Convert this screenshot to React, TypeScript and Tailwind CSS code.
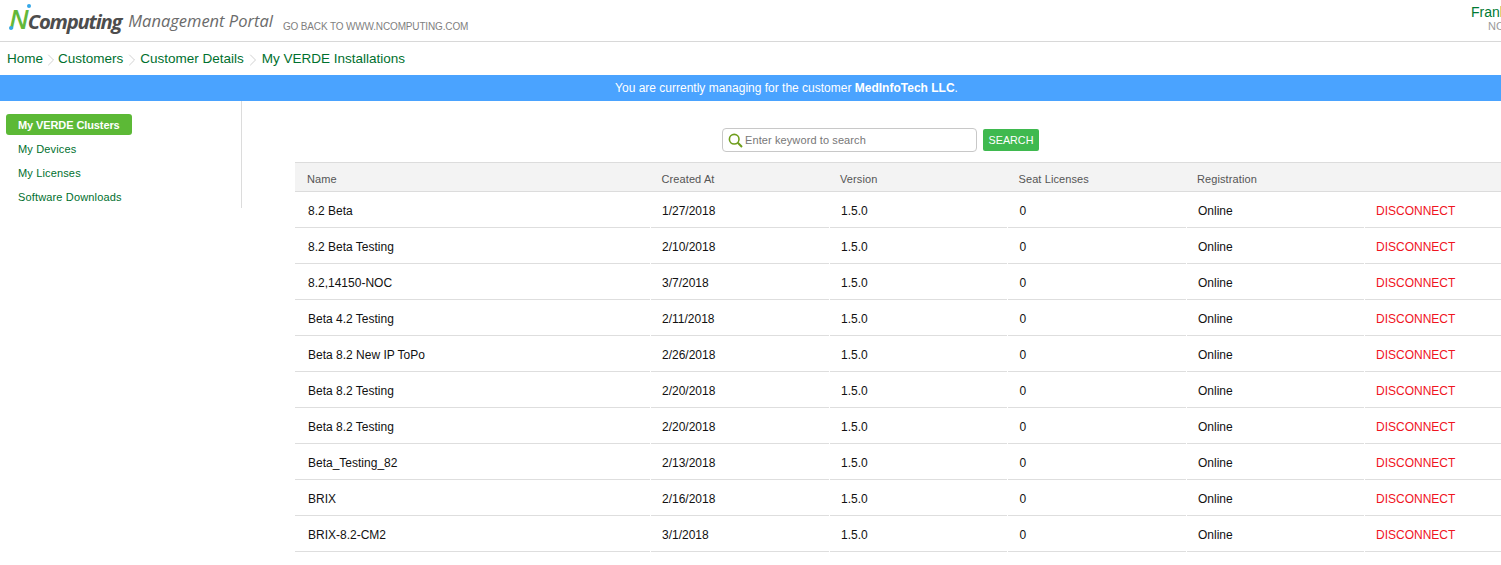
import React from 'react';
import { ChevronRight } from 'lucide-react';

const clusters = [
  { name: '8.2 Beta', created: '1/27/2018' },
  { name: '8.2 Beta Testing', created: '2/10/2018' },
  { name: '8.2,14150-NOC', created: '3/7/2018' },
  { name: 'Beta 4.2 Testing', created: '2/11/2018' },
  { name: 'Beta 8.2 New IP ToPo', created: '2/26/2018' },
  { name: 'Beta 8.2 Testing', created: '2/20/2018' },
  { name: 'Beta 8.2 Testing', created: '2/20/2018' },
  { name: 'Beta_Testing_82', created: '2/13/2018' },
  { name: 'BRIX', created: '2/16/2018' },
  { name: 'BRIX-8.2-CM2', created: '3/1/2018' },
];

const crumbs = [
  { label: 'Home', chevron: '' },
  { label: 'Customers', chevron: 'mx-[-2.5px]' },
  { label: 'Customer Details', chevron: 'mx-[-1.5px]' },
  { label: 'My VERDE Installations', chevron: 'mx-[-1px]' },
];
const navItems = ['My Devices', 'My Licenses', 'Software Downloads'];

const Logo = () => (
  <div className="relative flex items-baseline whitespace-nowrap">
    <span className="text-[27px] leading-[30px] font-semibold italic tracking-[-1px] text-[#63b83a] font-['Open_Sans',sans-serif]">N</span>
    <span className="absolute left-[18px] top-[0px] h-[4px] w-[4px] rounded-full bg-[#35a7e8]" />
    <span className="absolute left-[0px] top-[22px] h-[4px] w-[4px] rounded-full bg-[#35a7e8]" />
    <span className="text-[20.25px] leading-[30px] font-bold italic tracking-[-1.2px] text-[#4d4d4d] font-['Open_Sans',sans-serif]">Computing</span>
  </div>
);

const Row = ({ name, created }: { name: string; created: string }) => (
  <div className="flex h-9 text-xs text-[#111]">
    <div className="flex w-[355px] items-center border-b border-[#dedede] pl-[13px] pt-[3px]">{name}</div>
    <div className="ml-px flex w-[177.5px] items-center border-b border-[#dedede] pl-[11px] pt-[3px]">{created}</div>
    <div className="ml-px flex w-[177.5px] items-center border-b border-[#dedede] pl-[11.5px] pt-[3px]">1.5.0</div>
    <div className="ml-px flex w-[177.5px] items-center border-b border-[#dedede] pl-[11.5px] pt-[3px]">0</div>
    <div className="ml-px flex w-[177.5px] items-center border-b border-[#dedede] pl-[11.5px] pt-[3px]">Online</div>
    <div className="ml-px flex flex-1 items-center border-b border-[#dedede] pl-[11px] pt-[3px] text-[#f0141e]">DISCONNECT</div>
  </div>
);

export default function App() {
  return (
    <div className="h-[565px] w-[1501px] overflow-hidden bg-white font-['Liberation_Sans',Arial,sans-serif]">
      {/* Header */}
      <div className="relative flex h-[42px] items-start border-b border-[#d8d8d8] pl-[9px] pt-[4px]">
        <Logo />
        <span className="ml-[7px] mt-[4px] text-[16.5px] leading-[26px] italic text-[#6b6b6b] font-['Open_Sans',sans-serif] whitespace-nowrap">Management Portal</span>
        <a className="ml-[10px] mt-[17px] text-[10px] leading-[12px] tracking-[-0.15px] text-[#7f7f7f] whitespace-nowrap">GO BACK TO WWW.NCOMPUTING.COM</a>
        <div className="absolute left-[1471px] top-[4px] whitespace-nowrap text-sm leading-[16px] text-[#007a33]">Frank</div>
        <div className="absolute left-[1488px] top-[20px] whitespace-nowrap text-[11px] leading-[13px] text-[#9a9a9a]">NCOMPUTING</div>
      </div>

      {/* Breadcrumb */}
      <div className="flex h-[33px] items-center pl-[7px] pt-[2px] text-[13.5px] text-[#00702e]">
        {crumbs.map((crumb) => (
          <React.Fragment key={crumb.label}>
            {crumb.chevron && <ChevronRight className={`h-5 w-5 text-[#c8c8c8] ${crumb.chevron}`} strokeWidth={1} />}
            <span>{crumb.label}</span>
          </React.Fragment>
        ))}
      </div>

      {/* Banner */}
      <div className="flex h-[26px] items-center justify-center bg-[#4aa3ff] pl-[72px] text-xs text-white">
        <span>You are currently managing for the customer <b>MedInfoTech LLC</b>.</span>
      </div>

      <div className="flex items-start">
        {/* Sidebar */}
        <div className="h-[107px] w-[242px] shrink-0 border-r border-[#dcdcdc] pl-[6px] pt-[13px] text-[11px]">
          <div className="flex h-[21px] w-[126px] items-center rounded-[3px] bg-[#5cb936] pl-3 pt-[2px] font-bold tracking-[-0.1px] text-white">My VERDE Clusters</div>
          {navItems.map((item, i) => (
            <div key={item} className={`${i === 0 ? 'mt-[4px]' : 'mt-[3px]'} flex h-[21px] items-center pl-3 tracking-[0.15px] text-[#00702e]`}>{item}</div>
          ))}
        </div>

        {/* Content */}
        <div className="flex-1 pl-[53px]">
          <div className="flex h-[61px] items-start pl-[427px] pt-[27px]">
            <div className="flex h-[24px] w-[255px] items-center rounded-[4px] border border-[#c8c8c8] pl-[5px] text-[11px] tracking-[0.1px] text-[#777]">
              <svg width="15" height="15" viewBox="0 0 15 15" fill="none" stroke="#6f9e1c" strokeWidth="1.6" className="mr-[2px] shrink-0">
                <circle cx="6.2" cy="6.2" r="4.8" />
                <path d="M9.8 9.8 L14 14" strokeWidth="2" />
              </svg>
              Enter keyword to search
            </div>
            <div className="ml-[6px] mt-px flex h-[22px] w-[56px] items-center justify-center rounded-[2px] bg-[#3fb94f] text-[10.75px] text-white">SEARCH</div>
          </div>

          <div className="flex h-[30px] items-center border-y border-[#dcdcdc] bg-[#f3f3f3] pt-[5px] text-[11px] tracking-[0.1px] text-[#555]">
            <div className="w-[366.5px] pl-3">Name</div>
            <div className="w-[178.5px]">Created At</div>
            <div className="w-[178.5px]">Version</div>
            <div className="w-[178.5px]">Seat Licenses</div>
            <div className="w-[178.5px]">Registration</div>
          </div>
          {clusters.map((c, i) => (
            <Row key={i} name={c.name} created={c.created} />
          ))}
        </div>
      </div>
    </div>
  );
}
